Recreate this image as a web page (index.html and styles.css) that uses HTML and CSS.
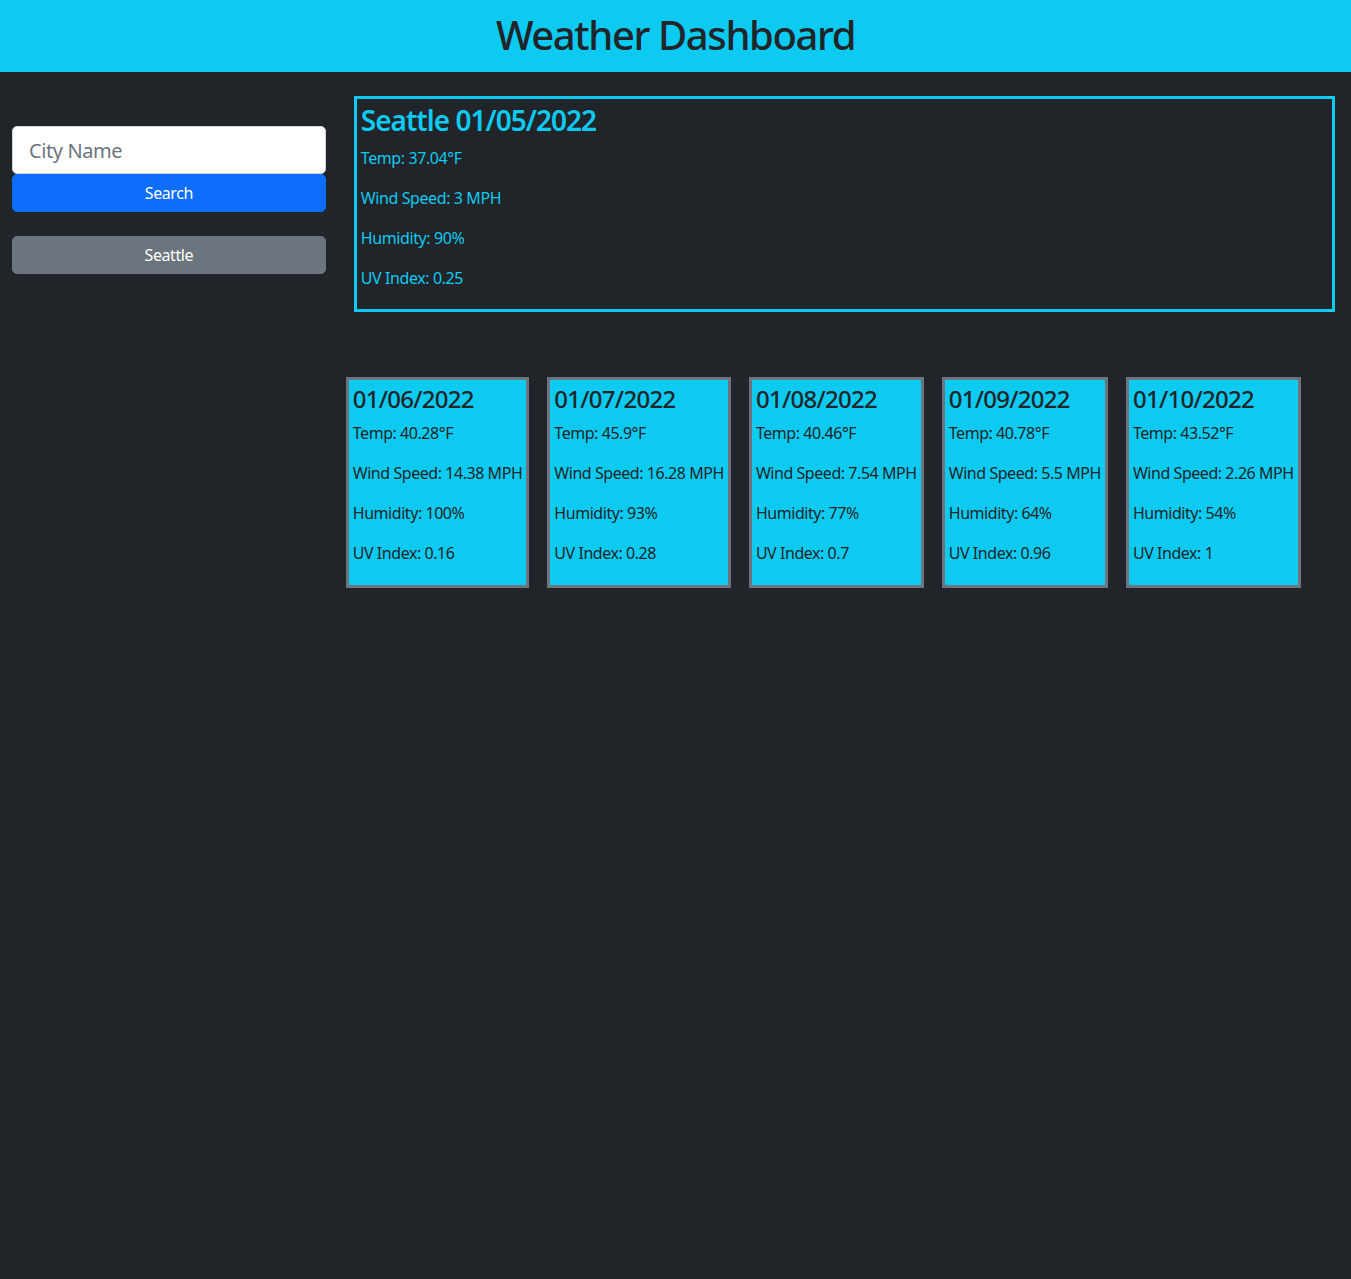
FILE: index.html
```html
<!DOCTYPE html>
<html lang="en">
<head>
<meta charset="utf-8">
<title>Weather Dashboard</title>
<link rel="stylesheet" href="styles.css">
</head>
<body>
<header class="topbar">
  <h1 class="topbar-title">Weather Dashboard</h1>
</header>
<main class="layout">
  <aside class="sidebar">
    <form class="search">
      <input class="search-input" type="text" placeholder="City Name">
      <button class="btn btn-primary" type="button">Search</button>
    </form>
    <div class="history">
      <button class="btn btn-secondary" type="button">Seattle</button>
    </div>
  </aside>
  <section class="content">
    <div class="current">
      <h3 class="current-title">Seattle 01/05/2022</h3>
      <p>Temp: 37.04°F</p>
      <p>Wind Speed: 3 MPH</p>
      <p>Humidity: 90%</p>
      <p>UV Index: 0.25</p>
    </div>
    <div class="forecast">
      <div class="card">
        <h4 class="card-title">01/06/2022</h4>
        <p>Temp: 40.28°F</p>
        <p>Wind Speed: 14.38 MPH</p>
        <p>Humidity: 100%</p>
        <p>UV Index: 0.16</p>
      </div>
      <div class="card">
        <h4 class="card-title">01/07/2022</h4>
        <p>Temp: 45.9°F</p>
        <p>Wind Speed: 16.28 MPH</p>
        <p>Humidity: 93%</p>
        <p>UV Index: 0.28</p>
      </div>
      <div class="card">
        <h4 class="card-title">01/08/2022</h4>
        <p>Temp: 40.46°F</p>
        <p>Wind Speed: 7.54 MPH</p>
        <p>Humidity: 77%</p>
        <p>UV Index: 0.7</p>
      </div>
      <div class="card">
        <h4 class="card-title">01/09/2022</h4>
        <p>Temp: 40.78°F</p>
        <p>Wind Speed: 5.5 MPH</p>
        <p>Humidity: 64%</p>
        <p>UV Index: 0.96</p>
      </div>
      <div class="card">
        <h4 class="card-title">01/10/2022</h4>
        <p>Temp: 43.52°F</p>
        <p>Wind Speed: 2.26 MPH</p>
        <p>Humidity: 54%</p>
        <p>UV Index: 1</p>
      </div>
    </div>
  </section>
</main>
</body>
</html>
```
FILE: styles.css
```css
html {
  background: #212529;
}
body {
  margin: 0;
  background: #212529;
  color: #212529;
  font-family: "Noto Sans", "Open Sans", sans-serif;
  font-size: 16px;
  line-height: 1.5;
  letter-spacing: -0.025em;
  min-height: 1279px;
}
p {
  margin: 0 0 16px;
}
.topbar {
  background: #0dcaf0;
  padding: 11px 0 13px;
}
.topbar-title {
  margin: 0;
  text-align: center;
  font-size: 40px;
  font-weight: 500;
  line-height: 1.2;
  letter-spacing: -0.035em;
  color: #212529;
}
.layout {
  display: flex;
  align-items: flex-start;
}
.sidebar {
  flex: 0 0 25%;
  min-width: 0;
  box-sizing: border-box;
  padding: 54px 12px 0;
}
.search {
  display: flex;
  flex-direction: column;
  margin: 0;
}
.search-input {
  box-sizing: border-box;
  width: 100%;
  min-width: 0;
  height: 48px;
  padding: 8px 16px;
  font-family: inherit;
  font-size: 20px;
  line-height: 1.5;
  letter-spacing: -0.02em;
  color: #212529;
  background: #fff;
  border: 1px solid #ced4da;
  border-radius: 5px;
  outline: none;
}
.search-input::placeholder {
  color: #6c757d;
}
.btn {
  display: block;
  width: 100%;
  box-sizing: border-box;
  height: 38px;
  padding: 6px 12px;
  font-family: inherit;
  font-size: 16px;
  line-height: 1.5;
  letter-spacing: -0.025em;
  color: #fff;
  border: 1px solid transparent;
  border-radius: 5px;
  text-align: center;
}
.btn-primary {
  background: #0d6efd;
  border-color: #0d6efd;
}
.btn-secondary {
  background: #6c757d;
  border-color: #6c757d;
}
.history {
  margin-top: 24px;
}
.content {
  flex: 1 1 auto;
  min-width: 0;
  padding: 24px 16px 0 8px;
}
.current {
  margin-left: 8px;
  border: 3px solid #0dcaf0;
  padding: 5px 4px 3px;
  color: #0dcaf0;
}
.current-title {
  margin: 0 0 8px;
  font-size: 28px;
  font-weight: 600;
  line-height: 1.2;
  letter-spacing: -0.035em;
}
.forecast {
  display: flex;
  gap: 18px;
  margin-top: 65px;
  align-items: flex-start;
}
.card {
  flex: none;
  white-space: nowrap;
  background: #0dcaf0;
  border: 3px solid #6c757d;
  padding: 5px 4px 4px 4px;
  color: #212529;
  letter-spacing: -0.028em;
}
.card-title {
  margin: 0 0 8px;
  font-size: 24px;
  font-weight: 500;
  line-height: 1.2;
  letter-spacing: -0.03em;
}
```
